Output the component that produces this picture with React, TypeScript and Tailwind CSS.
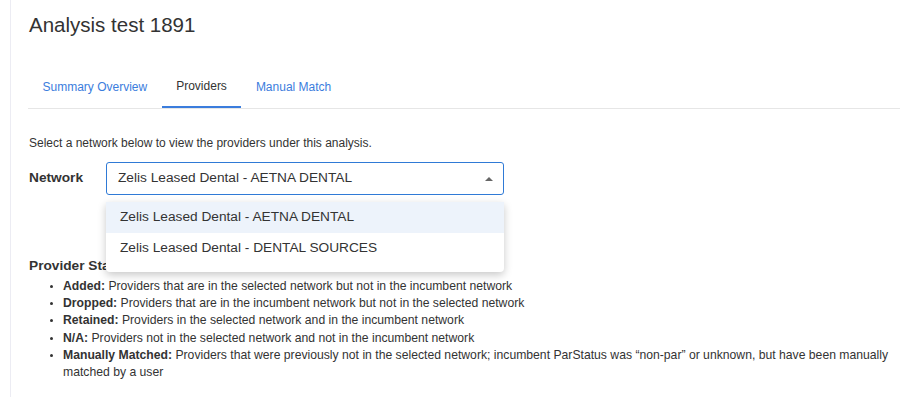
import React from "react";

const font = { fontFamily: '"Liberation Sans", Arial, sans-serif' };

export default function App() {
  const items: [string, string][] = [
    ["Added:", "Providers that are in the selected network but not in the incumbent network"],
    ["Dropped:", "Providers that are in the incumbent network but not in the selected network"],
    ["Retained:", "Providers in the selected network and in the incumbent network"],
    ["N/A:", "Providers not in the selected network and not in the incumbent network"],
    [
      "Manually Matched:",
      "Providers that were previously not in the selected network; incumbent ParStatus was \u201cnon-par\u201d or unknown, but have been manually matched by a user",
    ],
  ];
  return (
    <div className="w-[900px] h-[402px] bg-white overflow-hidden text-[#333]" style={font}>
      <div className="ml-[10px] h-[397px] border-l border-[#ececf3] pl-[18px] pr-0">
        <h1 className="pt-[12px] text-[20.5px] leading-[26px] font-normal text-[#333]">Analysis test 1891</h1>
        <div className="mt-[28px] -ml-px flex border-b border-[#e6e6e6] text-[12px]">
          <div className="px-[14.5px] h-[42px] flex items-center text-[#3b7ddd]">Summary Overview</div>
          <div className="px-[14.5px] h-[42px] flex items-center text-[#333] border-b-[2px] border-[#3b7ddd] -mb-px">Providers</div>
          <div className="px-[14.5px] h-[42px] flex items-center text-[#3b7ddd]">Manual Match</div>
        </div>
        <p className="mt-[26px] text-[12px] leading-[17px]">Select a network below to view the providers under this analysis.</p>
        <div className="mt-[10px] flex items-start">
          <div className="w-[77px] pt-[7px] text-[13.7px] leading-[17px] font-bold">Network</div>
          <div className="relative">
            <div className="w-[398px] h-[33px] border-[1.5px] border-[#2f7ad6] rounded-[3px] flex items-center pl-[11px] pr-[10px] text-[13.7px]">
              <span className="flex-1">Zelis Leased Dental - AETNA DENTAL</span>
              <span className="w-0 h-0 border-l-[4.5px] border-r-[4.5px] border-b-[4.5px] border-l-transparent border-r-transparent border-b-[#666]" />
            </div>
            <div className="absolute left-0 top-[40px] w-[398px] bg-white rounded-b-[4px] shadow-[0_3px_8px_rgba(0,0,0,0.22)] pb-[8px] z-10 text-[13.7px]">
              <div className="h-[31px] flex items-center pl-[14px] bg-[#edf3fb]">Zelis Leased Dental - AETNA DENTAL</div>
              <div className="h-[31px] flex items-center pl-[14px]">Zelis Leased Dental - DENTAL SOURCES</div>
            </div>
          </div>
        </div>
        <h2 className="mt-[62px] text-[13.7px] leading-[17px] font-bold">Provider Status Definitions</h2>
        <ul className="mt-[4px] pl-[34px] list-disc text-[12.2px] leading-[17.2px] marker:text-[10px]">
          {items.map(([k, v]) => (
            <li key={k} className="pl-0">
              <b>{k}</b> {v}
            </li>
          ))}
        </ul>
      </div>
    </div>
  );
}
